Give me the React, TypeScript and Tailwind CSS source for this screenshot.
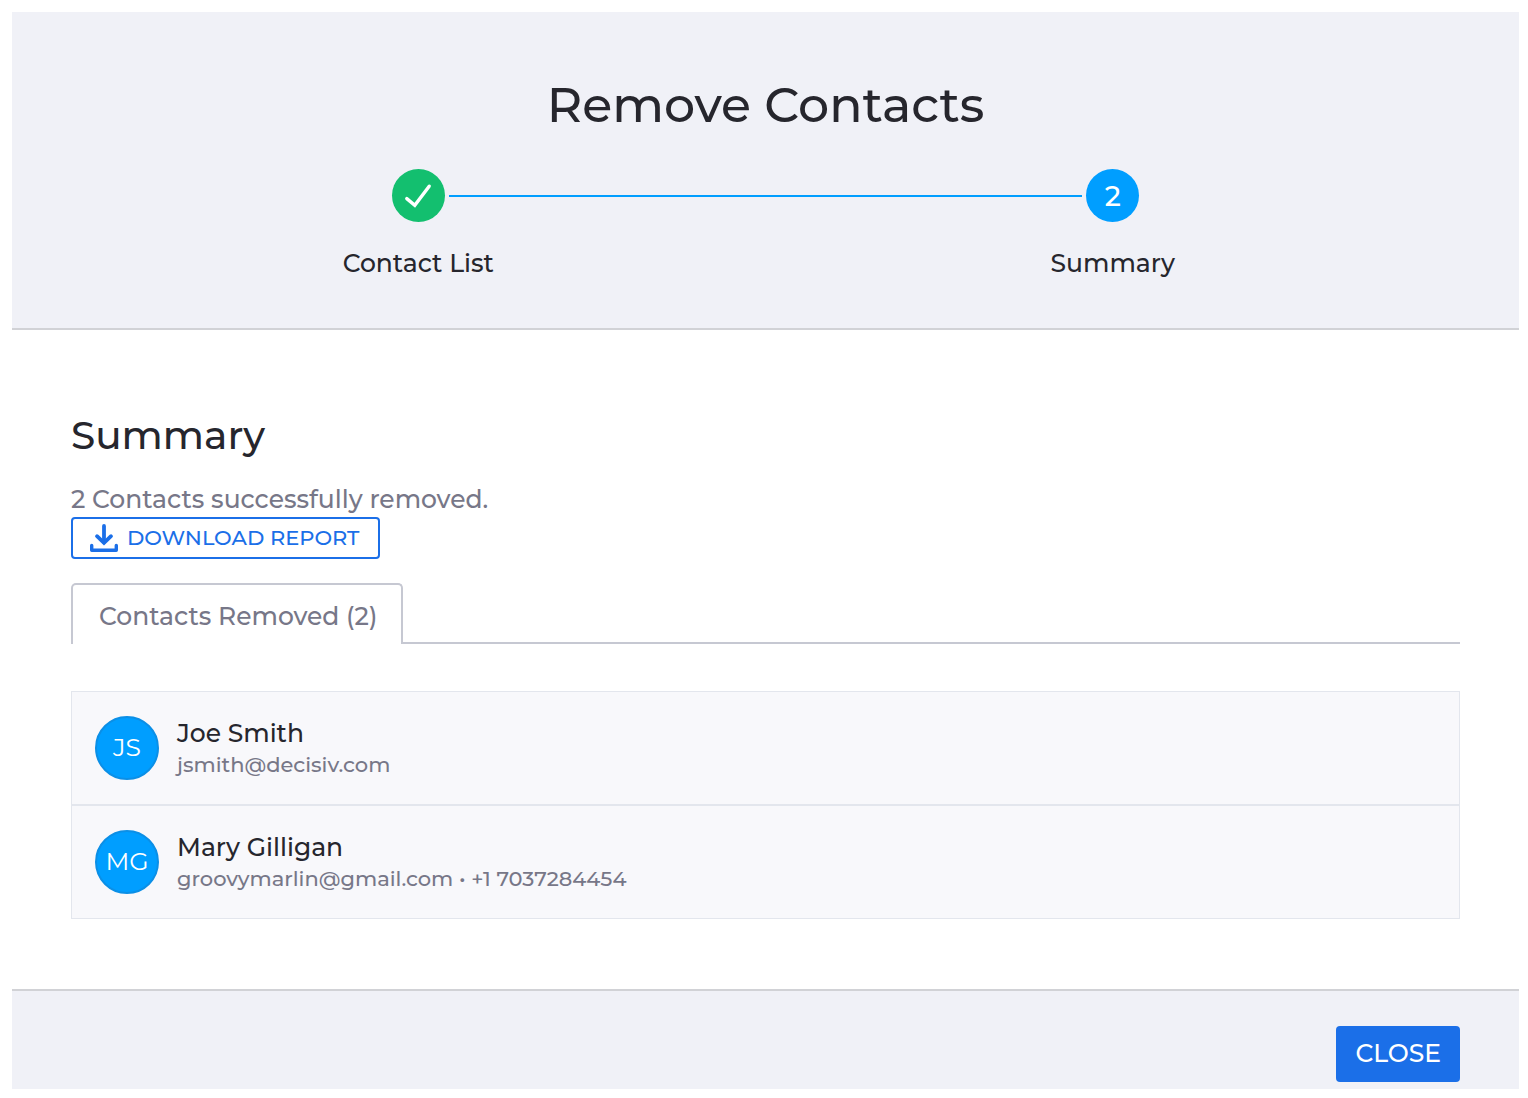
import React from "react";

type Contact = {
  initials: string;
  name: string;
  details: string;
};

const contacts: Contact[] = [
  { initials: "JS", name: "Joe Smith", details: "jsmith@decisiv.com" },
  {
    initials: "MG",
    name: "Mary Gilligan",
    details: "groovymarlin@gmail.com • +1 7037284454",
  },
];

function CheckIcon() {
  return (
    <svg width="28" height="26" viewBox="0 0 28 26" fill="none" aria-hidden="true">
      <path
        d="M2.8 15.6L10.8 22.2L25.2 3.2"
        stroke="white"
        strokeWidth="3.4"
        strokeLinecap="round"
      />
    </svg>
  );
}

function DownloadIcon() {
  return (
    <svg width="28" height="28" viewBox="0 0 28 28" fill="none" aria-hidden="true">
      <g stroke="currentColor" strokeLinecap="round">
        <path d="M14 2V18" strokeWidth="3.8" />
        <path d="M7 12.2L14 18.8L21 12.2" strokeWidth="3.8" />
        <path d="M1.7 21.4V26.2H26.3V21.4" strokeWidth="3.4" strokeLinejoin="round" />
      </g>
    </svg>
  );
}

function Step(props: {
  label: string;
  done?: boolean;
  children: React.ReactNode;
}) {
  return (
    <li className="flex flex-col items-center w-[53px] shrink-0">
      <div
        className={
          props.done
            ? "flex items-center justify-center w-[53px] h-[53px] rounded-full text-white bg-[#13bf6f]"
            : "flex items-center justify-center w-[53px] h-[53px] rounded-full text-white bg-[#009eff] text-[28px]"
        }
      >
        {props.children}
      </div>
      <span className="mt-[25px] text-[25px] leading-8 whitespace-nowrap">
        {props.label}
      </span>
    </li>
  );
}

function ContactRow(props: { contact: Contact }) {
  return (
    <li className="flex items-center gap-[18px] px-[23px] py-6">
      <div className="flex items-center justify-center w-16 h-16 shrink-0 rounded-full border-2 border-[#0b8fe6] bg-[#009eff] text-white text-[25px] font-normal">
        {props.contact.initials}
      </div>
      <div className="pt-[2px]">
        <p className="text-[25px] leading-[31px]">{props.contact.name}</p>
        <p className="text-[21px] leading-[31px] text-[#777788]">
          {props.contact.details}
        </p>
      </div>
    </li>
  );
}

export default function App() {
  return (
    <div className="pt-3 pl-3 pr-[9px] pb-[9px] bg-white text-[#26262d] font-medium font-['Montserrat','Inter',sans-serif]">
      <header className="flex flex-col items-center pt-[63px] pb-[49px] bg-[#f0f1f7] border-b-2 border-[#d1d2d6]">
        <h1 className="text-[49px] leading-[60px] font-medium">
          Remove Contacts
        </h1>
        <ol className="flex gap-1 w-1/2 px-[3px] mt-[34px]">
          <Step label="Contact List" done>
            <CheckIcon />
          </Step>
          <li
            aria-hidden="true"
            className="flex-1 h-[2px] mt-[26px] bg-[#009eff]"
          ></li>
          <Step label="Summary">2</Step>
        </ol>
      </header>

      <main className="px-[59px] pt-[81px] pb-[70px]">
        <h2 className="text-[39px] leading-[48px] font-medium">Summary</h2>
        <p className="mt-6 text-[25px] leading-8 text-[#777788]">
          2 Contacts successfully removed.
        </p>
        <button
          type="button"
          className="flex items-center gap-[9px] h-[42px] mt-[2px] pl-[17px] pr-[19px] rounded-[4px] border-2 border-[#1b6fe8] text-[#1b6fe8] text-[21px] font-medium whitespace-nowrap"
        >
          <DownloadIcon />
          DOWNLOAD REPORT
        </button>

        <div role="tablist" className="flex mt-6">
          <button
            type="button"
            role="tab"
            aria-selected="true"
            className="h-[61px] pl-[26px] pr-6 pt-[5px] rounded-t-[5px] border-2 border-b-0 border-[#c6c8d2] text-[25px] font-medium text-[#777788] whitespace-nowrap"
          >
            Contacts Removed (2)
          </button>
          <div className="flex-1 border-b-2 border-[#c6c8d2]"></div>
        </div>

        <ul className="mt-[47px] border border-[#e3e6ed] bg-[#f8f8fb] divide-y-2 divide-[#e3e6ed]">
          {contacts.map((contact) => (
            <ContactRow key={contact.name} contact={contact} />
          ))}
        </ul>
      </main>

      <footer className="flex justify-end px-[59px] pt-[35px] pb-[7px] bg-[#f0f1f7] border-t-2 border-[#d1d2d6]">
        <button
          type="button"
          className="h-14 px-[19px] rounded-[4px] bg-[#1b6fe8] text-white text-[25px] font-medium"
        >
          CLOSE
        </button>
      </footer>
    </div>
  );
}
